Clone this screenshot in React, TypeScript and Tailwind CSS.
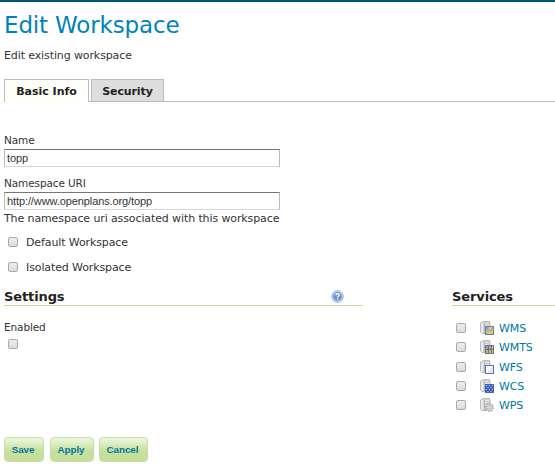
import React from "react";

type Kind = "WMS" | "WMTS" | "WFS" | "WCS" | "WPS";

const services: Kind[] = ["WMS", "WMTS", "WFS", "WCS", "WPS"];

function Checkbox() {
  return (
    <span className="mb-px block h-[10px] w-[10px] shrink-0 rounded-[2px] border border-[#a9a9a9] bg-linear-to-b from-[#ededed] to-[#dcdcdc]" />
  );
}

function Badge({ kind }: { kind: Kind }) {
  switch (kind) {
    case "WMS":
      return (
        <g>
          <rect x="5.5" y="5.5" width="8" height="8" fill="#c9d77c" stroke="#6a7fb5" />
          <path d="M6 6h3l-1 3-2 1z" fill="#7aa7dc" />
          <path d="M10 13l.5-5 2.5-1v6z" fill="#e9c36d" />
          <path d="M6 13l3-4 2 1 2-4" fill="none" stroke="#d0603f" strokeWidth=".6" />
        </g>
      );
    case "WMTS":
      return (
        <g>
          <rect x="5" y="5" width="9" height="9" fill="#6d7292" />
          <rect x="6" y="6" width="2" height="3" fill="#7aa7dc" />
          <rect x="9" y="6" width="2" height="3" fill="#d99b6c" />
          <rect x="12" y="6" width="1" height="3" fill="#e2cc54" />
          <rect x="6" y="10" width="2" height="3" fill="#a1c65f" />
          <rect x="9" y="10" width="2" height="3" fill="#e6b94d" />
          <rect x="12" y="10" width="1" height="3" fill="#c4cf65" />
        </g>
      );
    case "WFS":
      return (
        <g>
          <rect x="5.5" y="5.5" width="8" height="8" fill="#fff" stroke="#5573bd" />
          <path d="M13 6v7H7z" fill="#dce7fa" />
        </g>
      );
    case "WCS":
      return (
        <g>
          <rect x="5" y="5" width="9" height="9" fill="#4564b5" />
          <path d="M6 6.5h1M9 6.5h1M12 6.5h1M7.5 8.5h1M10.5 8.5h1M6 10.5h1M9 10.5h1M12 10.5h1M7.5 12.5h1M10.5 12.5h1" stroke="#a9bdec" />
        </g>
      );
    case "WPS":
      return (
        <g>
          <circle cx="9.5" cy="9.5" r="3.8" fill="#e5e5e5" stroke="#a5a5a5" strokeWidth="1.4" strokeDasharray="1.6 1.3" />
          <circle cx="9.5" cy="9.5" r="2.7" fill="#e7e7e7" stroke="#aaa" strokeWidth=".7" />
          <circle cx="9.5" cy="9.5" r="1.1" fill="#fff" stroke="#999" strokeWidth=".6" />
        </g>
      );
  }
}

function ServiceIcon({ kind }: { kind: Kind }) {
  return (
    <svg width="14" height="14" viewBox="0 0 14 14" className="mb-px block shrink-0">
      <path d="M.5 2L3.5.5h6l.5 1v9.5l-2.5 1.5H2L.5 11z" fill="#cfcfcf" stroke="#b0b0b0" strokeWidth=".8" />
      <path d="M1 2.4L3.7 1v11H2L1 11z" fill="#e9e9e9" />
      <path d="M5 2.5h4M5 4.5h4" stroke="#e6e6e6" strokeWidth=".9" />
      <path d="M4.3 1.5v10.5" stroke="#a2a2a2" strokeWidth=".8" />
      <Badge kind={kind} />
    </svg>
  );
}

function HelpIcon() {
  return (
    <svg width="13" height="13" viewBox="0 0 13 13" className="mt-[2px] block">
      <circle cx="6.5" cy="6.5" r="5.9" fill="#c3d9f2" stroke="#8fb2dc" strokeWidth=".8" />
      <circle cx="6.5" cy="6.5" r="4.4" fill="#6594cf" />
      <path d="M4.8 5.3C4.8 3.2 8.3 3.3 8.2 5.2C8.1 6.3 6.6 6.3 6.6 7.5" fill="none" stroke="#fff" strokeWidth="1.3" />
      <rect x="5.9" y="8.5" width="1.4" height="1.3" fill="#fff" />
    </svg>
  );
}

function Field({ label, value }: { label: string; value: string }) {
  return (
    <div className="h-[43px]">
      <div className="h-[15px] leading-[15px] text-[10.5px]">{label}</div>
      <div className="mt-px h-[18px] w-[276px] border border-t-[#767676] border-r-[#b8b8b8] border-b-[#d5d5d5] border-l-[#b8b8b8] bg-white pl-[2px] font-['Liberation_Sans',Arial,sans-serif] text-[11px] leading-[17px] tracking-[-0.1px]">
        {value}
      </div>
    </div>
  );
}

function Button({ label, width }: { label: string; width: string }) {
  return (
    <button
      className={`${width} h-[25px] rounded-[4px] border border-[#c6e09b] bg-linear-to-b from-[#f0f7e4] to-[#c6e09b] to-55% pr-[2px] text-center font-['Liberation_Sans',Arial,sans-serif] text-[9.8px] leading-[23px] font-bold tracking-[-0.05px] text-[#0076a1]`}
    >
      {label}
    </button>
  );
}

export default function App() {
  return (
    <div className="h-[469px] w-[555px] overflow-hidden border-t-2 border-[#00557b] bg-white pl-1 font-['DejaVu_Sans',Verdana,sans-serif] text-[11px] tracking-[-0.11px] text-[#333]">
      <h1 className="h-[44px] pt-[7px] text-[23px] leading-[32px] tracking-[-0.15px] whitespace-nowrap text-[#0083b8]">Edit Workspace</h1>
      <p className="h-[31px] pt-[2px] leading-[15px]">Edit existing workspace</p>

      <div className="flex h-[25px] items-end font-bold text-[#222]">
        <div className="h-[23px] w-[85px] border border-b-0 border-[#bbb] bg-[#fffffa] pt-px text-center leading-[22px] tracking-normal">Basic Info</div>
        <div className="h-[23px] w-[2px] border-b border-[#bbb]" />
        <div className="h-[23px] w-[73px] border border-[#bbb] bg-[#ddd] pt-px text-center leading-[22px]">Security</div>
        <div className="h-[23px] flex-1 border-b border-[#bbb]" />
      </div>

      <div className="pt-[31px]">
        <Field label="Name" value="topp" />
        <Field label="Namespace URI" value="http://www.openplans.org/topp" />
      </div>
      <div className="-mt-[8px] h-[15px] leading-[15px]">The namespace uri associated with this workspace</div>

      <div className="mt-[4px] flex h-[25px] items-center pl-1">
        <Checkbox />
        <span className="ml-[8px] leading-[15px]">Default Workspace</span>
      </div>
      <div className="flex h-[25px] items-center pl-1">
        <Checkbox />
        <span className="ml-[8px] leading-[15px]">Isolated Workspace</span>
      </div>

      <div className="mt-[8px] flex">
        <section className="w-[359px]">
          <div className="flex h-[18px] justify-between border-b border-[#c6e09b] pr-[19px]">
            <h2 className="text-[13px] leading-[18px] font-bold text-[#222]">Settings</h2>
            <HelpIcon />
          </div>
          <div className="mt-[14px] leading-[15px] text-[10.5px]">Enabled</div>
          <div className="mt-[4px] pl-1">
            <Checkbox />
          </div>
        </section>
        <section className="ml-[89px] flex-1">
          <div className="h-[18px] border-b border-[#c6e09b]">
            <h2 className="text-[13px] leading-[18px] font-bold text-[#222]">Services</h2>
          </div>
          <div className="pt-[13px]">
            {services.map((s) => (
              <div key={s} className="flex h-[19.3px] items-center pl-1">
                <Checkbox />
                <span className="ml-[14px]">
                  <ServiceIcon kind={s} />
                </span>
                <span className="ml-[5px] leading-[15px] text-[#0076a1]">{s}</span>
              </div>
            ))}
          </div>
        </section>
      </div>

      <div className="mt-[22px] flex">
        <Button label="Save" width="w-[40px]" />
        <Button label="Apply" width="ml-[6px] w-[44px]" />
        <Button label="Cancel" width="ml-[5px] w-[49px]" />
      </div>
    </div>
  );
}
